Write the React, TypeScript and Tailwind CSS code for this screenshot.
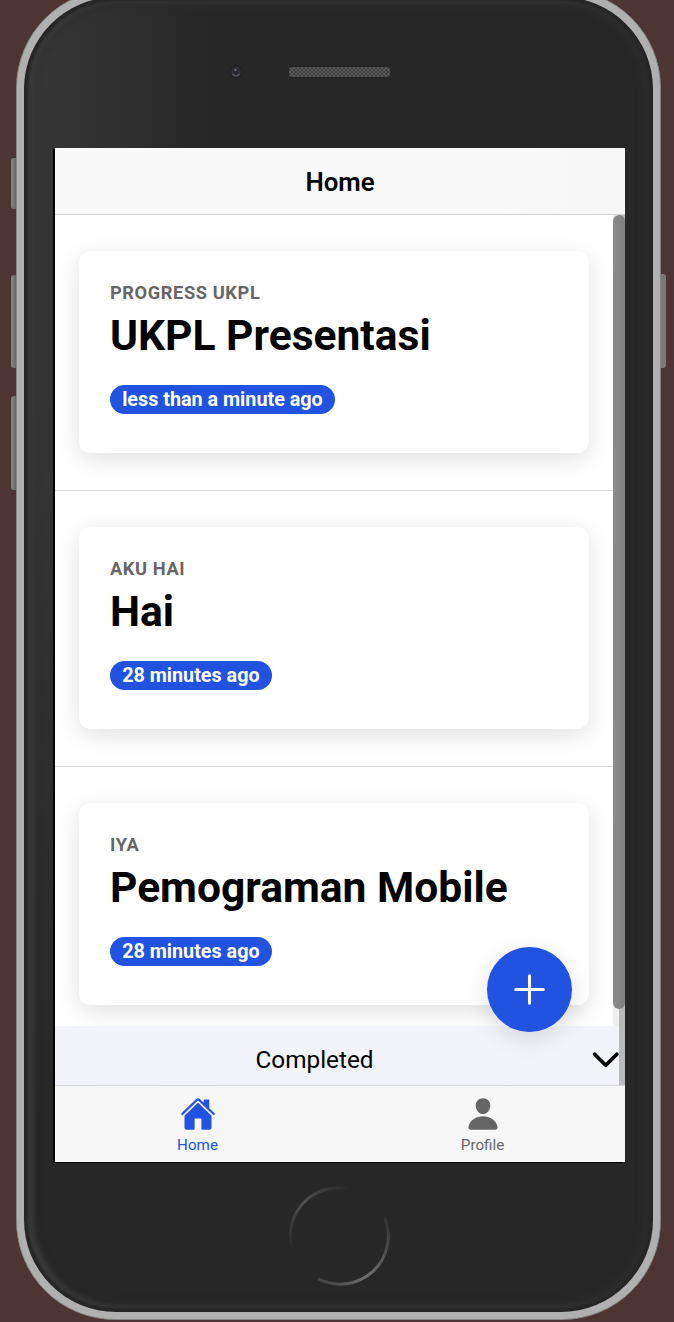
import React from "react";
import { IoAdd, IoChevronDown, IoHome, IoPerson } from "react-icons/io5";

type Task = { subject: string; title: string; age: string };

const tasks: Task[] = [
  { subject: "Progress UKPL", title: "UKPL Presentasi", age: "less than a minute ago" },
  { subject: "Aku Hai", title: "Hai", age: "28 minutes ago" },
  { subject: "Iya", title: "Pemograman Mobile", age: "28 minutes ago" },
];

function TaskItem({ task }: { task: Task }) {
  return (
    <li className="h-[276px] shrink-0 border-b border-[#dadada] pt-[36.4px] pr-[24.3px] pl-[24.3px]">
      <article className="flex h-[202px] flex-col items-start rounded-[12px] bg-white px-[30.7px] pt-[30.6px] shadow-[0_6px_24px_rgba(0,0,0,0.12)]">
        <p className="text-[18.24px] leading-[22px] font-bold tracking-[0.6px] text-[#666666] uppercase">
          {task.subject}
        </p>
        <h2 className="mt-[6px] text-[42.56px] leading-[51px] font-bold whitespace-nowrap text-black">{task.title}</h2>
        <span className="mt-[24px] flex h-[29px] items-center rounded-full bg-[#2152e0] px-[12.16px] pt-px text-[19.76px] font-bold whitespace-nowrap text-white">
          {task.age}
        </span>
      </article>
    </li>
  );
}

function Screen() {
  return (
    <div className="relative flex h-[1014px] w-[570px] flex-col bg-white shadow-[-2px_1px_0_#000]">
      <header className="flex h-[67px] shrink-0 items-center justify-center border-b border-[#d3d3d3] bg-linear-to-r from-[#f9f9f9] from-80% to-[#f6f6f6] pt-[2px] text-[25.84px] font-semibold text-black">
        Home
      </header>
      <main className="flex h-[811px] shrink-0 overflow-hidden">
        <ul className="flex w-[558px] flex-col overflow-hidden">
          {tasks.map((task) => (
            <TaskItem key={task.title} task={task} />
          ))}
        </ul>
        <div className="w-[12px] bg-linear-to-r from-[#efefef] from-50% to-[#b9b9b9] to-50%">
          <div className="h-[794px] rounded-full bg-linear-to-r from-[#8b8b8b] to-[#818181]" />
        </div>
      </main>
      <div className="flex h-[59px] shrink-0 bg-linear-to-r from-[#f3f4f9] from-[564px] to-[#bababd] to-[564px]">
        <button className="flex w-[570px] items-center pt-[9px] text-[24.32px] text-black">
          <span className="w-[518px] shrink-0 pl-px text-center">Completed</span>
          <IoChevronDown className="ml-[12.5px] size-[39.5px] shrink-0" />
        </button>
      </div>
      <nav className="flex h-[77px] border-t border-[#d8d8da] bg-[#f7f7f7] text-[15.2px] leading-[18px]">
        <a className="flex flex-1 flex-col items-center pt-[10px] text-[#2152e0]">
          <IoHome className="ml-[0.5px] size-[36px]" />
          <span className="mt-[4px]">Home</span>
        </a>
        <a className="flex flex-1 flex-col items-center pt-[10px] text-[#666666]">
          <IoPerson className="ml-[0.5px] size-[36px]" />
          <span className="mt-[4px]">Profile</span>
        </a>
      </nav>
      <button className="absolute right-[53px] bottom-[130.5px] flex size-[85px] items-center justify-center rounded-full bg-[#2152e0] text-white shadow-[0_6px_24px_rgba(0,0,0,0.13)]">
        <IoAdd className="size-[49px]" />
      </button>
    </div>
  );
}

function Camera() {
  return (
    <svg viewBox="0 0 18 18" className="size-[18px]">
      <circle cx="9" cy="9" r="7" fill="#222227" />
      <circle cx="9" cy="9" r="4.8" fill="#303036" />
      <circle cx="9" cy="9" r="2.3" fill="#22222a" />
      <circle cx="8.5" cy="7" r="1.1" fill="#77777d" />
      <path d="M5.3 11Q9 14.5 12.7 11" fill="none" stroke="#56565b" strokeWidth="1.3" />
    </svg>
  );
}

function Speaker() {
  return (
    <svg viewBox="0 0 102 10" className="h-[10px] w-[102px]">
      <defs>
        <pattern id="mesh" width="4" height="4" patternUnits="userSpaceOnUse">
          <rect width="4" height="4" fill="#404040" />
          <path d="M0 0h2v2H0zM2 2h2v2H2z" fill="#585858" />
        </pattern>
      </defs>
      <rect width="101" height="10" rx="3" fill="url(#mesh)" />
    </svg>
  );
}

function HomeButton() {
  return (
    <svg viewBox="0 0 104 104" className="size-[104px]">
      <defs>
        <linearGradient id="arcTop" x1="0" y1="1" x2="1" y2="0">
          <stop offset="0" stopColor="#292929" />
          <stop offset=".5" stopColor="#505050" />
          <stop offset="1" stopColor="#292929" />
        </linearGradient>
        <linearGradient id="arcBottom" x1="0" y1="1" x2="1" y2="0">
          <stop offset="0" stopColor="#3d3d3d" />
          <stop offset=".4" stopColor="#707070" />
          <stop offset="1" stopColor="#303030" />
        </linearGradient>
      </defs>
      <g fill="none" strokeWidth="3">
        <path d="M4 64A48 48 0 0 1 60 4.7" stroke="url(#arcTop)" />
        <path d="M30 94.6A48 48 0 0 0 96.8 34" stroke="url(#arcBottom)" />
      </g>
    </svg>
  );
}

export default function App() {
  return (
    <div className="h-[1322px] w-[674px] overflow-hidden bg-[#4c3532] font-[Roboto,sans-serif]">
      <div className="-mt-[11px] flex w-[674px] items-start pl-[11px]">
        <div className="flex w-[5px] flex-col pt-[169px]">
          <div className="h-[51px] rounded-l-[3px] bg-linear-to-r from-[#8b8786] to-[#686666]" />
          <div className="mt-[66px] h-[93px] rounded-l-[3px] bg-linear-to-r from-[#8b8786] to-[#686666]" />
          <div className="mt-[28px] h-[94px] rounded-l-[3px] bg-linear-to-r from-[#8b8786] to-[#686666]" />
        </div>
        <div className="h-[1331px] w-[645px] rounded-[99px] border border-[#858585] bg-[#b0b0b0] p-[7px]">
          <div className="flex h-[1315px] w-[629px] flex-col rounded-[92px] bg-[linear-gradient(to_bottom,transparent_30%,#272727_85%),linear-gradient(to_right,#373737,#272727_30%)] pl-[31px] shadow-[inset_0_0_2px_4px_#262626,inset_5px_0_5px_5px_#393939,inset_0_0_8px_9px_#2d2d2d]">
            <div className="flex h-[151px] shrink-0 items-start pt-[66px] pl-[172px]">
              <Camera />
              <div className="pt-[4px] pl-[44px]">
                <Speaker />
              </div>
            </div>
            <Screen />
            <div className="flex w-[570px] justify-center pt-[22px]">
              <HomeButton />
            </div>
          </div>
        </div>
        <div className="w-[5px] pt-[285px]">
          <div className="h-[94px] rounded-r-[3px] bg-[#7d7b7a]" />
        </div>
      </div>
    </div>
  );
}
